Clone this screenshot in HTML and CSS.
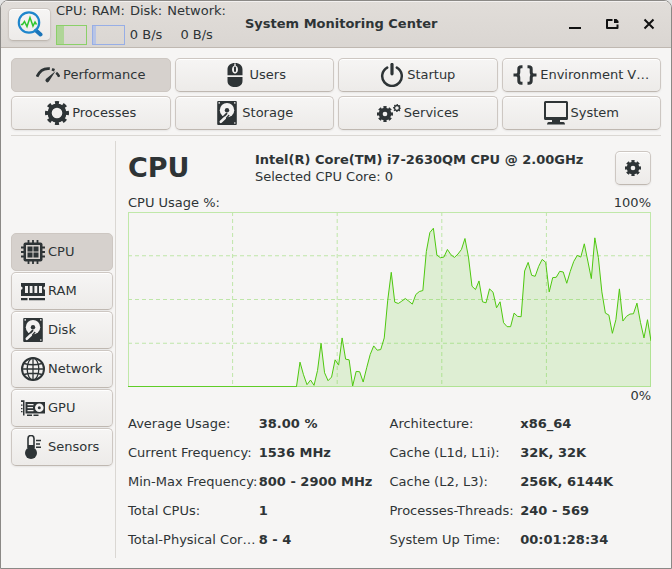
FILE: index.html
```html
<!DOCTYPE html>
<html lang="en">
<head>
<meta charset="utf-8">
<title>System Monitoring Center</title>
<link rel="stylesheet" href="styles.css">
</head>
<body>
<svg class="defs" aria-hidden="true">
  <symbol id="i-gear" viewBox="0 0 24 24">
    <circle cx="12" cy="12" r="7.400" fill="none" stroke="currentColor" stroke-width="4.200"/>
    <circle cx="12" cy="12" r="10.300" fill="none" stroke="currentColor" stroke-width="3.400" pathLength="16" stroke-dasharray="1 1" stroke-dashoffset="0.5"/>
  </symbol>
  <symbol id="i-gear-solid" viewBox="0 0 24 24">
    <circle cx="12" cy="12" r="6.500" fill="none" stroke="currentColor" stroke-width="6"/>
    <circle cx="12" cy="12" r="10.200" fill="none" stroke="currentColor" stroke-width="3.600" pathLength="16" stroke-dasharray="1.200 .8" stroke-dashoffset="0.6"/>
  </symbol>
  <symbol id="i-disk" viewBox="0 0 24 24">
    <rect x="2.200" y="0" width="19.600" height="24" rx="1" fill="currentColor"/>
    <circle cx="12" cy="9.200" r="7.200" fill="#f3f2f1"/>
    <circle cx="12" cy="9.200" r="2.200" fill="currentColor"/>
    <path d="M13 13 5 21.400" stroke="currentColor" stroke-width="4.600"/>
    <path d="M5.800 20.800 9.800 17" stroke="#f3f2f1" stroke-width="2.600" stroke-linecap="round"/>
    <path d="M9.500 17.300 13.600 12.600" stroke="#f3f2f1" stroke-width="1.400"/>
    <g fill="#f3f2f1"><circle cx="4.200" cy="1.900" r=".8"/><circle cx="19.800" cy="1.900" r=".8"/><circle cx="19.800" cy="22" r=".8"/></g>
  </symbol>
</svg>
<div class="window">
  <header class="titlebar">
    <button class="btn logo" aria-label="Main menu">
      <svg width="26" height="26" viewBox="0 0 26 26" fill="none">
        <path d="M19 19.500 23.500 23.500" stroke="#1b75b9" stroke-width="4" stroke-linecap="round"/>
        <circle cx="12" cy="11.500" r="10.200" stroke="#1f86cc" stroke-width="2.200"/>
        <path d="M4 13.500h1.500l2-3 2.500 5 3-9 3 8.500 2-4 1.500 2.500" stroke="#2fc62f" stroke-width="1.500"/>
      </svg>
    </button>
    <div class="summary">
      <span>CPU:</span><span>RAM:</span><span>Disk:</span><span>Network:</span>
      <i class="meter cpu"></i><i class="meter ram"></i><span>0 B/s</span><span>0 B/s</span>
    </div>
    <h1>System Monitoring Center</h1>
    <div class="controls">
      <button aria-label="Minimize"><svg width="16" height="16" viewBox="0 0 16 16"><path d="M2 12h12" stroke="#111" stroke-width="2"/></svg></button>
      <button aria-label="Restore"><svg width="16" height="16" viewBox="0 0 16 16" fill="none"><path d="M8.500 4H3v8h10.500V8.500" stroke="#111" stroke-width="2" stroke-linejoin="round"/><path d="M10 3h2.500L14.500 5v2H10z" fill="#111"/></svg></button>
      <button aria-label="Close"><svg width="16" height="16" viewBox="0 0 16 16"><path d="m3.500 3.500 9 9m0-9-9 9" stroke="#111" stroke-width="2"/></svg></button>
    </div>
  </header>

  <nav class="tabs">
    <button class="btn active"><svg class="icon" viewBox="0 0 24 24" fill="none"><path d="M1 13.800C3.500 8 8 5 13.800 5.700" stroke="currentColor" stroke-width="2.800"/><path d="M20.200 9.800Q22.200 11.300 23.200 13.800" stroke="currentColor" stroke-width="2.600"/><path d="M16 6.200 18.500 7.200" stroke="currentColor" stroke-width="2.600"/><path d="M19.600 8 12.900 18.600a1.900 1.900 0 1 1-3-2.500z" fill="currentColor"/></svg>Performance</button>
    <button class="btn"><svg class="icon" viewBox="0 0 24 24"><path fill="currentColor" d="M4.500 12.300V6.500C4.500 2.500 7.500 0 12 0s7.500 2.500 7.500 6.500v5.800zM4.500 14h15v4c0 4-3.500 6-7.500 6s-7.500-2-7.500-6z"/><path d="M11.300.5v2.300C8.300 3.500 8.300 9.500 11.300 10.500h1.400c3-1 3-7 0-7.700V.5z" fill="#f3f2f1"/><rect x="11" y="3.600" width="2" height="5.400" rx="1" fill="currentColor"/></svg>Users</button>
    <button class="btn"><svg class="icon" viewBox="0 0 24 24" fill="none" stroke="currentColor"><path d="M7.200 4.600a9.800 9.800 0 1 0 9.600 0" stroke-width="2.500" stroke-linecap="round"/><path d="M12 1.500v9.300" stroke-width="3.200" stroke-linecap="round"/></svg>Startup</button>
    <button class="btn"><svg class="icon" viewBox="0 0 24 24" fill="none" stroke="currentColor" stroke-width="3"><path d="M9.500 3.800H8.200Q5.800 3.800 5.800 6v3.300Q5.800 12 3 12H.5H3q2.800 0 2.800 2.700V18q0 2.200 2.400 2.200h1.300M14.500 3.800h1.300q2.400 0 2.400 2.200v3.300Q18.200 12 21 12h2.500H21q-2.800 0-2.800 2.700V18q0 2.200-2.400 2.200h-1.300"/></svg>Environment V…</button>
    <button class="btn"><svg class="icon"><use href="#i-gear"/></svg>Processes</button>
    <button class="btn"><svg class="icon"><use href="#i-disk"/></svg>Storage</button>
    <button class="btn"><svg class="icon" viewBox="0 0 24 24"><use href="#i-gear-solid" x="0" y="5" width="16" height="16"/><use href="#i-gear" x="16" y="3" width="8" height="8"/></svg>Services</button>
    <button class="btn"><svg class="icon" viewBox="0 0 24 24"><path fill="currentColor" fill-rule="evenodd" d="M1.500 0h21A1.500 1.500 0 0 1 24 1.500v16a1.500 1.500 0 0 1-1.500 1.500h-21A1.500 1.500 0 0 1 0 17.500v-16A1.500 1.500 0 0 1 1.500 0zM2 2v14h20V2z"/><path d="M8 19h8v2h3.500q1.500 0 1.500 2.500H3Q3 21 4.500 21H8z" fill="currentColor"/></svg>System</button>
  </nav>

  <main class="body">
    <nav class="side">
      <button class="btn active"><svg class="icon" viewBox="0 0 24 24"><path d="M7.500 0v24M12 0v24M16.500 0v24M0 7.500h24M0 12h24M0 16.500h24" stroke="currentColor" stroke-width="1.800"/><rect x="2.500" y="2.500" width="19" height="19" rx="2" fill="currentColor"/><rect x="5" y="5" width="14" height="14" fill="#d6d1cd"/><path d="M6.500 6.500h5v5h-5zM12.500 6.500h5v5h-5zM6.500 12.500h5v5h-5zM12.500 12.500h5v5h-5z" fill="currentColor"/></svg>CPU</button>
      <button class="btn"><svg class="icon" viewBox="0 0 24 24" fill="currentColor"><path fill-rule="evenodd" d="M0 4h24v3.500a1.600 1.600 0 0 0 0 3.200V17H0v-6.300a1.600 1.600 0 0 0 0-3.200zM4 7v7h3V7zm4.700 0v7h2.800V7zm4.700 0v7h2.800V7zM18 7v7h3V7z"/><path d="M0 19h6.500v2.300H0zM8 19h16v2.300H8z"/></svg>RAM</button>
      <button class="btn"><svg class="icon"><use href="#i-disk"/></svg>Disk</button>
      <button class="btn"><svg class="icon" viewBox="0 0 24 24" fill="none" stroke="currentColor" stroke-width="1.300"><circle cx="12" cy="12" r="11" stroke-width="2"/><ellipse cx="12" cy="12" rx="5.800" ry="11"/><path d="M12 1v22M1 12h22M3 6.500q9 2.500 18 0M3 17.500q9-2.500 18 0"/></svg>Network</button>
      <button class="btn"><svg class="icon" viewBox="0 0 24 24" fill="currentColor"><path d="M0 4.300h3.500V19.500H2V6H0zM0 8.500h1.500v1.300H0zM0 12h1.500v1.300H0zM0 15h1.500v1.300H0z"/><path fill-rule="evenodd" d="M4.500 6H24v11.500H4.500zM6.500 8v1.200h6V8zm0 3v1.200h5.500V11zm0 3v1.200h6V14z"/><path d="M6 18.500h5V20H6zM12.500 18.500h5V20h-5z"/><circle cx="18.300" cy="11.800" r="4.300" fill="#f3f2f1"/><circle cx="18.300" cy="11.800" r="1.500"/></svg>GPU</button>
      <button class="btn"><svg class="icon" viewBox="0 0 24 24"><path d="M7 13V3.500a3 3 0 0 1 6 0V13" fill="none" stroke="currentColor" stroke-width="1.600"/><circle cx="10" cy="18" r="6" fill="currentColor"/><path d="M7 10h6v6H7z" fill="currentColor"/><path d="M15 5.500h5M15 9h4M15 12.300h5" stroke="currentColor" stroke-width="1.500"/></svg>Sensors</button>
    </nav>

    <section class="content">
      <div class="heading">
        <h2>CPU</h2>
        <div class="device"><strong>Intel(R) Core(TM) i7-2630QM CPU @ 2.00GHz</strong><span>Selected CPU Core: 0</span></div>
        <button class="btn settings" aria-label="Settings"><svg width="16" height="16"><use href="#i-gear-solid"/></svg></button>
      </div>
      <div class="caption"><span>CPU Usage %:</span><span>100%</span></div>
      <svg class="chart" viewBox="0 6 149 528" preserveAspectRatio="none" role="img" aria-label="CPU usage history">
        <g class="grid">
          <path class="frame" d="M0 6H149V534H0z"/>
          <path class="rule" d="M0 138H149M0 270H149M0 402H149"/>
          <path class="rule" d="M29.800 6V534M59.600 6V534M89.400 6V534M119.200 6V534"/>
        </g>
        <path class="area" d="M48 533 49 459 50 497 51 527 52 513 53 529 54 484 55 402 56 491 57 515 58 504 59 452 60 468 61 386 62 450 63 452 64 531 65 487 66 488 67 519 68 476 69 436 70 410 71 423 72 421 73 386 74 272 75 188 76 278 77 282 78 275 79 267 80 275 81 284 82 255 83 246 84 243 85 125 86 68 87 55 88 136 89 144 90 142 91 119 92 135 93 143 94 133 95 119 96 86 97 142 98 230 99 240 100 214 101 277 102 280 103 238 104 248 105 295 106 277 107 340 108 352 109 352 110 311 111 321 112 322 113 184 114 158 115 197 116 200 117 170 118 149 119 158 120 247 121 204 122 203 123 185 124 187 125 221 126 185 127 155 128 137 129 142 130 102 131 154 132 207 133 84 134 143 135 247 136 311 137 317 138 372 139 331 140 238 141 335 142 321 143 314 144 313 145 281 146 339 147 386 148 331 149 395V534H48z"/>
        <path class="line" d="M0 533H48L49 459 50 497 51 527 52 513 53 529 54 484 55 402 56 491 57 515 58 504 59 452 60 468 61 386 62 450 63 452 64 531 65 487 66 488 67 519 68 476 69 436 70 410 71 423 72 421 73 386 74 272 75 188 76 278 77 282 78 275 79 267 80 275 81 284 82 255 83 246 84 243 85 125 86 68 87 55 88 136 89 144 90 142 91 119 92 135 93 143 94 133 95 119 96 86 97 142 98 230 99 240 100 214 101 277 102 280 103 238 104 248 105 295 106 277 107 340 108 352 109 352 110 311 111 321 112 322 113 184 114 158 115 197 116 200 117 170 118 149 119 158 120 247 121 204 122 203 123 185 124 187 125 221 126 185 127 155 128 137 129 142 130 102 131 154 132 207 133 84 134 143 135 247 136 311 137 317 138 372 139 331 140 238 141 335 142 321 143 314 144 313 145 281 146 339 147 386 148 331 149 395"/>
      </svg>
      <div class="caption end"><span>0%</span></div>
      <dl class="facts">
        <dt>Average Usage:</dt><dd>38.00 %</dd><dt>Architecture:</dt><dd>x86_64</dd>
        <dt>Current Frequency:</dt><dd>1536 MHz</dd><dt>Cache (L1d, L1i):</dt><dd>32K, 32K</dd>
        <dt>Min-Max Frequency:</dt><dd>800 - 2900 MHz</dd><dt>Cache (L2, L3):</dt><dd>256K, 6144K</dd>
        <dt>Total CPUs:</dt><dd>1</dd><dt>Processes-Threads:</dt><dd>240 - 569</dd>
        <dt>Total-Physical Cor…</dt><dd>8 - 4</dd><dt>System Up Time:</dt><dd>00:01:28:34</dd>
      </dl>
    </section>
  </main>
</div>
</body>
</html>
```

FILE: styles.css
```css
* {
  box-sizing: border-box;
}

body {
  margin: 0;
  background: #e4e4e4;
  color: #2e3436;
  font: 13px/16px "DejaVu Sans", sans-serif;
}

button {
  font: inherit;
  color: inherit;
  padding: 0;
}

.defs {
  display: none;
}

.window {
  display: flex;
  flex-direction: column;
  min-height: 100vh;
  border: 1px solid #8b8986;
  border-radius: 8px 8px 0 0;
  background: #f6f5f4;
  overflow: hidden;
}

.titlebar {
  display: flex;
  align-items: center;
  height: 47px;
  padding: 0 10px 0 7px;
  background: linear-gradient(#e1ddd9, #dad6d2);
  border-bottom: 1px solid #bfb8b1;
  box-shadow: inset 0 1px #f3f1f0;
}

.btn {
  display: flex;
  align-items: center;
  justify-content: center;
  gap: 3px;
  border: 1px solid #cdc7c2;
  border-bottom-color: #bfb8b1;
  border-radius: 5px;
  background: linear-gradient(#f6f5f4, #edebe9);
  box-shadow: inset 0 1px #fff, 0 1px 2px rgba(0, 0, 0, 0.07);
  white-space: nowrap;
}

.btn.active {
  background: #d6d1cd;
  border-color: #cdc7c2;
  box-shadow: none;
}

.icon {
  flex: none;
  width: 24px;
  height: 24px;
}

.logo {
  width: 43px;
  height: 33px;
}

.summary {
  display: grid;
  grid-template-columns: repeat(4, auto);
  grid-template-rows: 16px 20px;
  gap: 6px 5px;
  justify-items: center;
  align-items: center;
  margin-left: 5px;
}

.meter {
  justify-self: stretch;
  height: 20px;
  border: 1px solid #8bd069;
}

.meter.cpu {
  background: linear-gradient(to right, #afd597 23%, transparent 23%);
}

.meter.ram {
  border-color: #97aee6;
  background: linear-gradient(to right, #b7c4e6 10%, transparent 10%);
}

h1 {
  margin: 0 0 0 19px;
  font-size: 13px;
  white-space: nowrap;
}

.controls {
  display: flex;
  gap: 13px;
  margin-left: auto;
}

.controls button {
  display: grid;
  place-items: center;
  width: 24px;
  height: 24px;
  border: 0;
  background: none;
}

.tabs {
  display: grid;
  grid-template-columns: repeat(4, 1fr);
  grid-auto-rows: 34px;
  gap: 4px;
  margin: 10px 10px 0;
  padding-bottom: 5px;
  border-bottom: 1px solid #dad7d3;
}

.body {
  display: flex;
  flex: 1;
  margin: 5px 10px 10px;
}

.side {
  display: flex;
  flex-direction: column;
  justify-content: center;
  gap: 1px;
  width: 105px;
  padding-right: 2px;
  border-right: 1px solid #dad7d3;
}

.side .btn {
  justify-content: flex-start;
  height: 38px;
  padding-left: 9px;
}

.content {
  display: flex;
  flex: 1;
  flex-direction: column;
  min-width: 0;
  padding: 10px 10px 0 12px;
}

.heading {
  display: flex;
  align-items: center;
  height: 34px;
}

h2 {
  flex: 0 0 127px;
  margin: 0;
  font-size: 27px;
  line-height: 32px;
}

.device {
  display: flex;
  flex-direction: column;
  gap: 1px;
  white-space: nowrap;
}

.settings {
  width: 36px;
  height: 34px;
  margin-left: auto;
}

.caption {
  display: flex;
  justify-content: space-between;
  margin-top: 10px;
}

.caption.end {
  justify-content: flex-end;
  margin-top: 1px;
}

.chart {
  flex: 1 0 160px;
  width: 100%;
  min-height: 0;
  margin-top: 1px;
  overflow: hidden;
}

.chart path {
  fill: none;
  vector-effect: non-scaling-stroke;
}

.chart .frame {
  stroke: #c0e8a9;
  stroke-width: 2;
}

.chart .rule {
  stroke: #bfe6a9;
  stroke-width: 1;
  stroke-dasharray: 4 3;
}

.chart .area {
  fill: rgba(86, 200, 26, 0.15);
}

.chart .line {
  stroke: #4ec80f;
  stroke-width: 1;
}

.facts {
  display: grid;
  grid-template-columns: repeat(4, 1fr);
  grid-auto-rows: 29px;
  align-items: center;
  margin: 5px 0 4px;
  white-space: nowrap;
}

.facts dt {
  min-width: 0;
}

.facts dd {
  margin: 0;
  min-width: 0;
  font-weight: bold;
}
```
